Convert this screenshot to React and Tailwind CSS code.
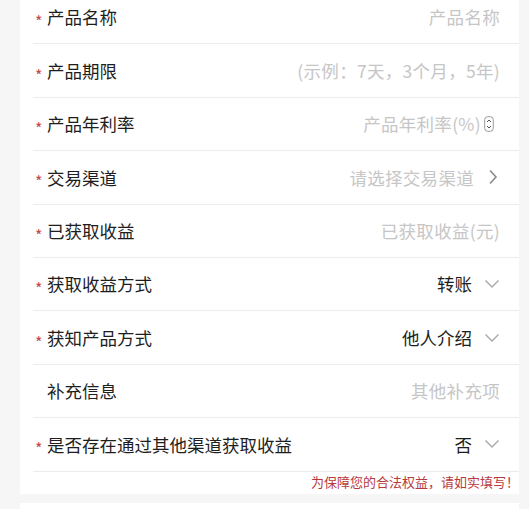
import React from "react";

const ChevronDown = () => (
  <svg width="16" height="10" viewBox="0 0 16 10" className="ml-[12px]">
    <path d="M1.5 1.5 L8 8 L14.5 1.5" fill="none" stroke="#a8a8a8" strokeWidth="1.4" />
  </svg>
);

const ChevronRight = () => (
  <svg width="10" height="16" viewBox="0 0 10 16" className="ml-[14px] mr-[2px]">
    <path d="M2 1.5 L8 8 L2 14.5" fill="none" stroke="#8a8a8a" strokeWidth="1.6" />
  </svg>
);

const Spinner = () => (
  <svg width="10" height="16" viewBox="0 0 10 16" className="ml-[3px] mr-[6px]">
    <rect x="0.7" y="0.7" width="8.6" height="14.6" rx="3" fill="#fff" stroke="#9a9a9a" strokeWidth="1" />
    <path d="M3 6 L5 4 L7 6" fill="none" stroke="#555" strokeWidth="1" />
    <path d="M3 10 L5 12 L7 10" fill="none" stroke="#555" strokeWidth="1" />
  </svg>
);

const rows = [
  { req: true, label: "产品名称", ph: "产品名称" },
  { req: true, label: "产品期限", ph: "(示例：7天，3个月，5年)" },
  { req: true, label: "产品年利率", ph: "产品年利率(%)", icon: "spin" },
  { req: true, label: "交易渠道", ph: "请选择交易渠道", icon: "right" },
  { req: true, label: "已获取收益", ph: "已获取收益(元)" },
  { req: true, label: "获取收益方式", val: "转账", icon: "down" },
  { req: true, label: "获知产品方式", val: "他人介绍", icon: "down" },
  { req: false, label: "补充信息", ph: "其他补充项" },
  { req: true, label: "是否存在通过其他渠道获取收益", val: "否", icon: "down" },
];

export default function App() {
  return (
    <div
      className="w-[529px] h-[509px] overflow-hidden bg-[#f6f6f6]"
      style={{ fontFamily: '"Noto Sans CJK SC", "Noto Sans", sans-serif' }}
    >
      <div className="ml-[20px] mr-[10px] mt-[-9px] bg-white pb-[2px]">
        {rows.map((r, i) => (
          <div
            key={i}
            className="ml-[13px] h-[53.4px] border-b border-[#ececec] flex items-center pr-[19px]"
          >
            <span className="w-[14px] h-[18px] flex items-center text-[16px] text-[#c24848] leading-none pl-[2px]">
              <span className="mt-[8px]">{r.req ? "*" : ""}</span>
            </span>
            <span className="text-[17.5px] text-[#1e1e1e] leading-none">{r.label}</span>
            <div className="ml-auto flex items-center">
              {r.ph && (
                <span className="text-[17.5px] tracking-[0.3px] text-[#c6c6c6] leading-none">{r.ph}</span>
              )}
              {r.val && (
                <span className="text-[17.5px] text-[#1e1e1e] leading-none">{r.val}</span>
              )}
              {r.icon === "down" && <ChevronDown />}
              {r.icon === "right" && <ChevronRight />}
              {r.icon === "spin" && <Spinner />}
            </div>
          </div>
        ))}
        <div className="flex justify-end pr-[0px] pt-[3px] h-[20px]">
          <span className="text-[13px] text-[#b8393d] leading-none">
            为保障您的合法权益，请如实填写！
          </span>
        </div>
      </div>
      <div className="ml-[20px] mr-[10px] mt-[9px] h-[20px] bg-white" />
    </div>
  );
}
